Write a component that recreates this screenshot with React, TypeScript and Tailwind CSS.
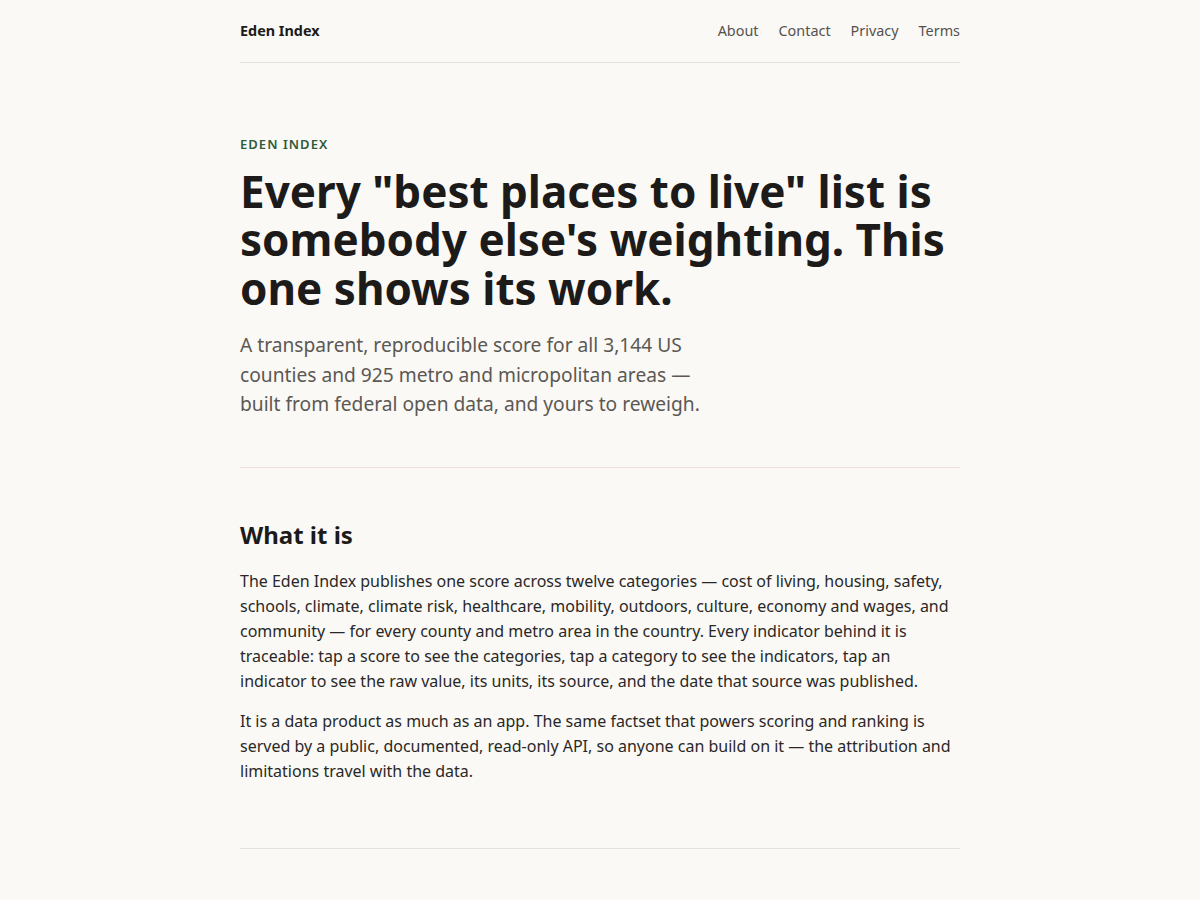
export default function App() {
  return (
    <div className="min-h-screen bg-[#faf9f6] text-[#1c1b1a] font-['Noto_Sans',sans-serif]">
      <div className="mx-auto w-[720px]">
        <header className="flex h-[63px] items-center justify-between border-b border-[#e7e1dc]">
          <a className="text-[14.4px] font-bold text-[#1c1b1a]">Eden Index</a>
          <nav className="flex gap-5 text-[14.4px] text-[#55524e]">
            <a>About</a>
            <a>Contact</a>
            <a>Privacy</a>
            <a>Terms</a>
          </nav>
        </header>

        <section className="border-b border-[#ecdfdc] pt-[72px] pb-[48px]">
          <p className="text-[13px] font-semibold uppercase tracking-[0.08em] text-[#2f5a3c]">Eden Index</p>
          <h1 className="mt-[12px] text-[44px] font-bold leading-[48.5px]">
            Every "best places to live" list is somebody else's weighting. This one shows its work.
          </h1>
          <p className="mt-[18px] max-w-[480px] text-[19.2px] leading-[29.5px] text-[#5c5853]">
            A transparent, reproducible score for all 3,144 US counties and 925 metro and micropolitan areas — built from federal open data, and yours to reweigh.
          </p>
        </section>

        <section className="border-b border-[#e7e1dc] pt-[49px] pb-[64px]">
          <h2 className="text-[24px] font-bold leading-[36px]">What it is</h2>
          <div className="mt-[16px] flex flex-col gap-[15px] text-[16px] leading-[25px] text-[#2a2826]">
            <p>
              The Eden Index publishes one score across twelve categories — cost of living, housing, safety, schools, climate, climate risk, healthcare, mobility, outdoors, culture, economy and wages, and community — for every county and metro area in the country. Every indicator behind it is traceable: tap a score to see the categories, tap a category to see the indicators, tap an indicator to see the raw value, its units, its source, and the date that source was published.
            </p>
            <p>
              It is a data product as much as an app. The same factset that powers scoring and ranking is served by a public, documented, read-only API, so anyone can build on it — the attribution and limitations travel with the data.
            </p>
          </div>
        </section>
        <div className="h-[60px]" />
      </div>
    </div>
  )
}
